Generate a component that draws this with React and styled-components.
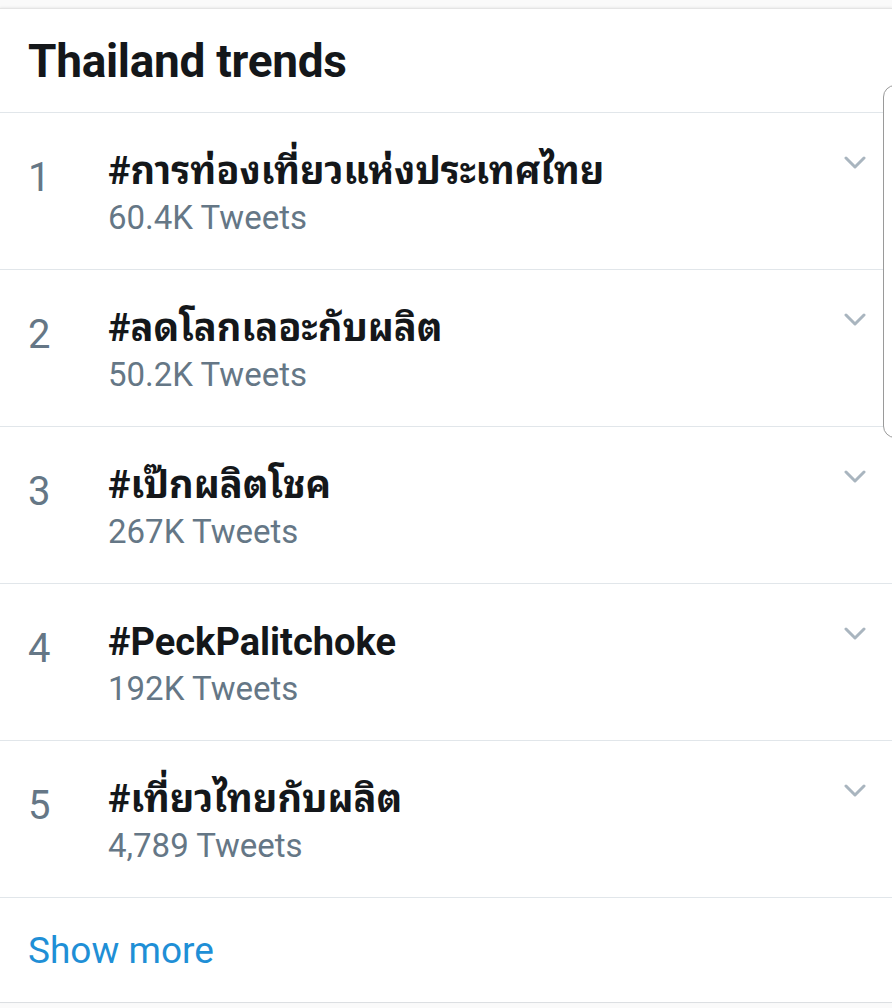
import styled, {createGlobalStyle} from 'styled-components'

const GlobalStyle = createGlobalStyle`
  html, body {
    margin: 0;
    padding: 0;
    background: #fafafa;
  }
  body {
    font-family: Roboto, "Noto Sans Thai Looped", "Noto Sans Thai", "DejaVu Sans", sans-serif;
  }
`

const colors = {
  text: '#14171a',
  muted: '#657786',
  divider: '#e1e6ea',
  chevron: '#a9b5bf',
  link: '#1f8fd6'
}

const Page = styled.div`
  position: relative;
  width: 892px;
  height: 1008px;
  overflow: hidden;
  padding-top: 8px;
  box-sizing: border-box;
  background: #fafafa;
`

const Card = styled.section`
  background: #fff;
  border-top: 1px solid #e4e4e4;
  box-shadow: 0 -1px 2px rgba(0, 0, 0, 0.06);
  border-bottom: 1px solid #dcdfe2;
`

const Header = styled.header`
  height: 104px;
  box-sizing: border-box;
  padding: 24px 28px 0;
  border-bottom: 1px solid ${colors.divider};
`

const Title = styled.h2`
  margin: 0;
  font-size: 46px;
  line-height: 56px;
  font-weight: 700;
  color: ${colors.text};
  letter-spacing: -0.3px;
`

const Row = styled.div`
  display: flex;
  align-items: flex-start;
  height: 157px;
  box-sizing: border-box;
  padding: 0 26px 0 28px;
  border-bottom: 1px solid ${colors.divider};
`

const Rank = styled.div`
  width: 80px;
  flex: none;
  padding-top: 41px;
  font-size: 40px;
  line-height: 48px;
  color: ${colors.muted};
`

const Body = styled.div`
  flex: 1;
  padding-top: 34px;
`

const Name = styled.div`
  font-size: 38px;
  line-height: 48px;
  font-weight: 700;
  color: ${colors.text};
`

const Count = styled.div`
  margin-top: 3px;
  font-size: 33px;
  line-height: 40px;
  color: ${colors.muted};
`

const Chevron = styled.svg`
  flex: none;
  margin-top: 43px;
  width: 22px;
  height: 13px;
`

const ShowMore = styled.a`
  display: block;
  height: 104px;
  box-sizing: border-box;
  padding: 29px 28px 0;
  font-size: 37px;
  line-height: 48px;
  color: ${colors.link};
  text-decoration: none;
`

const ScrollEdge = styled.div`
  position: absolute;
  left: 883px;
  top: 85px;
  width: 30px;
  height: 351px;
  border: 1.5px solid #9a9a9a;
  border-radius: 12px;
  background: #fff;
`

const trends = [
  {name: '#การท่องเที่ยวแห่งประเทศไทย', count: '60.4K Tweets'},
  {name: '#ลดโลกเลอะกับผลิต', count: '50.2K Tweets'},
  {name: '#เป๊กผลิตโชค', count: '267K Tweets'},
  {name: '#PeckPalitchoke', count: '192K Tweets'},
  {name: '#เที่ยวไทยกับผลิต', count: '4,789 Tweets'}
]

const ChevronIcon = () => (
  <Chevron viewBox="0 0 22 13" fill="none">
    <path d="M2 2l9 9 9-9" stroke={colors.chevron} strokeWidth="3" strokeLinecap="round" strokeLinejoin="round" />
  </Chevron>
)

export default function App() {
  return (
    <Page>
      <GlobalStyle />
      <Card>
        <Header>
          <Title>Thailand trends</Title>
        </Header>
        {trends.map((t, i) => (
          <Row key={t.name}>
            <Rank>{i + 1}</Rank>
            <Body>
              <Name>{t.name}</Name>
              <Count>{t.count}</Count>
            </Body>
            <ChevronIcon />
          </Row>
        ))}
        <ShowMore href="#">Show more</ShowMore>
      </Card>
      <ScrollEdge />
    </Page>
  )
}
